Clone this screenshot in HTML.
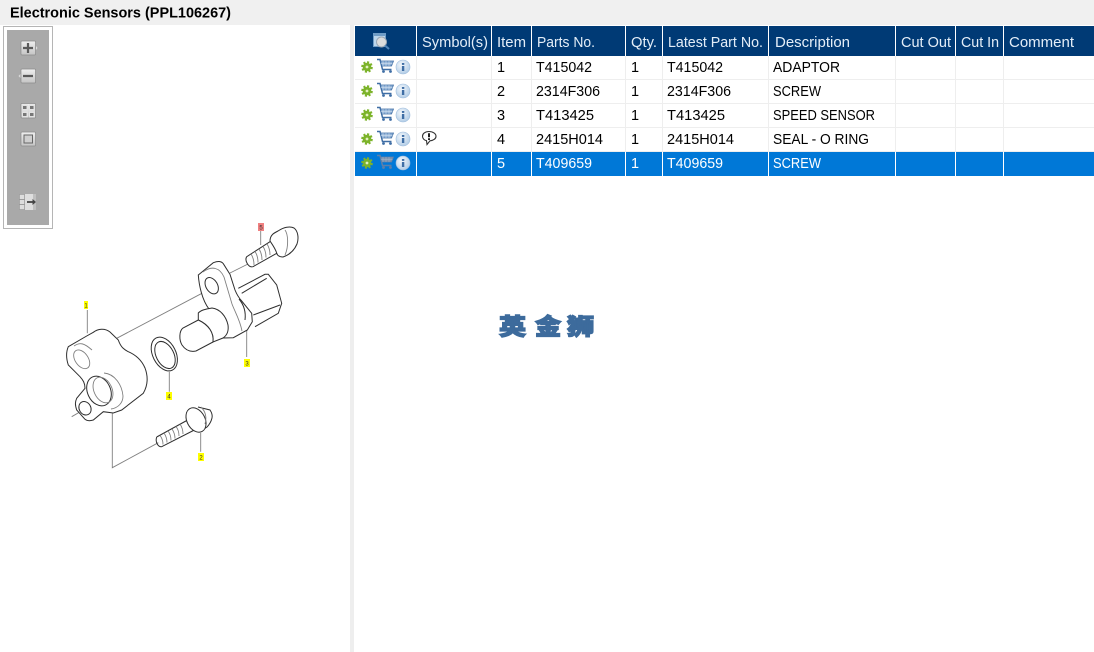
<!DOCTYPE html>
<html><head><meta charset="utf-8"><style>
html,body{margin:0;padding:0;width:1094px;height:652px;overflow:hidden;background:#fff}
svg{display:block;font-family:"Liberation Sans",sans-serif}
.h{fill:#e4eef8;font-size:14.5px}
.c{fill:#000;font-size:14.5px}
.w{fill:#fff;font-size:14.5px}
.d{fill:none;stroke:#2e2e2e;stroke-width:1}
.l{fill:none;stroke:#808080;stroke-width:.9}
.n{font-size:6px;fill:#333;text-anchor:middle}
</style></head><body>
<svg width="1094" height="652" viewBox="0 0 1094 652" xmlns="http://www.w3.org/2000/svg">
<defs>
<filter id="s" x="-5%" y="-5%" width="110%" height="110%"><feGaussianBlur stdDeviation=".3"/></filter>
<linearGradient id="b" x1="0" y1="0" x2="0" y2="1"><stop offset="0" stop-color="#efefef"/><stop offset="1" stop-color="#c4c4c4"/></linearGradient>
<radialGradient id="i" cx=".4" cy=".35" r=".8"><stop offset="0" stop-color="#f4f8fc"/><stop offset="1" stop-color="#a5c4e2"/></radialGradient>
<g id="gear"><circle r="4.300" fill="#7cb32a"/><circle r="4.800" fill="none" stroke="#7cb32a" stroke-width="2" stroke-dasharray="2.100 1.650"/><circle r="1.400" fill="#e3f0c0"/></g>
<g id="cart"><path d="M-8-6.500H-5L-2.500 3.500H6.500" fill="none" stroke="#3f6ea5" stroke-width="1.500"/><path d="M-4.700-5H8.500L6.500 0H-3.200Z" fill="#8fb0d6" stroke="#3f6ea5" stroke-width=".8"/><path d="M-2-5V0M1-5V0M4-5V0M-4-2.500H7.500" stroke="#dbe7f3" stroke-width=".5"/><circle cx="-1.500" cy="5.500" r="1.400" fill="#3f6ea5"/><circle cx="5.500" cy="5.500" r="1.400" fill="#3f6ea5"/></g>
<g id="cart2"><path d="M-8-6.500H-5L-2.500 3.500H6.500" fill="none" stroke="#5f7fa8" stroke-width="1.500"/><path d="M-4.700-5H8.500L6.500 0H-3.200Z" fill="#7c93b0" stroke="#5f7fa8" stroke-width=".8"/><path d="M-2-5V0M1-5V0M4-5V0M-4-2.500H7.500" stroke="#a9b8ca" stroke-width=".5"/><circle cx="-1.500" cy="5.500" r="1.400" fill="#5f7fa8"/><circle cx="5.500" cy="5.500" r="1.400" fill="#5f7fa8"/></g>
<g id="info"><circle r="7" fill="url(#i)" stroke="#9dbcdc" stroke-width=".6"/><rect x="-1.100" y="-1" width="2.400" height="5" fill="#3f6ea5"/><rect x="-1.100" y="-4" width="2.400" height="1.900" fill="#3f6ea5"/></g>
</defs>

<rect width="1094" height="25" fill="#f0f0f0"/>
<rect x="350" y="25" width="4" height="627" fill="#eeeeee"/>
<text x="10" y="17.500" font-size="14.500" font-weight="700" fill="#000" textLength="221" lengthAdjust="spacingAndGlyphs">Electronic Sensors (PPL106267)</text>

<rect x="3.500" y="26.500" width="49" height="202" fill="#fff" stroke="#b5b5b5"/>
<rect x="7" y="30" width="42" height="195" fill="#a9a9a9"/>
<g stroke="#8c8c8c" stroke-width=".7" fill="url(#b)">
<rect x="21" y="41" width="14.500" height="14" rx="1"/>
<rect x="21" y="69" width="14.500" height="14" rx="1"/>
<rect x="21" y="103.500" width="14.500" height="14.500" rx="1"/>
<rect x="21" y="132" width="14.500" height="14" rx="1"/>
</g>
<path d="M36 46l1.500 2-1.500 2ZM20.500 74l-2 2 2 2Z" fill="#ddd"/>
<path d="M28 43v10M23 48h10M23 76h10" stroke="#5a5a5a" stroke-width="2.200"/>
<path d="M22 104.500h6v6h-6ZM29 104.500h6v6h-6ZM22 111.500h6v6h-6ZM29 111.500h6v6h-6Z" fill="#e2e2e2"/>
<path d="M23 106h3.500v3H23ZM30 106h3.500v3H30ZM23 113h3.500v3H23ZM30 113h3.500v3H30Z" fill="#777"/>
<rect x="24" y="135" width="8.500" height="8" fill="#cfcfcf" stroke="#666" stroke-width="1"/>
<rect x="19.500" y="194.500" width="5" height="15" fill="#ddd" stroke="#999" stroke-width=".6"/>
<path d="M19.500 199.500h5M19.500 204.500h5" stroke="#888" stroke-width=".8"/>
<rect x="25" y="194" width="8" height="16" fill="#e8e8e8" opacity=".85"/>
<rect x="33" y="194" width="3" height="16" fill="#e8e8e8" opacity=".35"/>
<path d="M27 202h7" stroke="#444" stroke-width="1.800"/><path d="M32.500 199l3.500 3-3.500 3Z" fill="#444"/>

<g filter="url(#s)">
<path class="l" d="M116.700 338.300L205 291.700M230 273L250 263M260.700 231V245M246.700 330V357M87.300 310V333.300M71.700 416.700L86.700 408M112.300 413V467.700L158.300 442.700M169.300 371.700V391.700M200.700 433V451.700"/>
<path class="d" style="fill:#fff" d="M68.300 346.700L86.700 336 93.300 332.300C98 328.500 105 328 110 332L118.300 340C121 348 125 350 128.300 351.700C136 355 142 361 145 368C148 376 148 385 143.300 393.300L121.700 410 113.300 413 103.300 411.700 93.300 420C90 421 87 421 85 419.300L76.700 410C75 405 75 402 76.700 398.300L85 388.300C85 383 83 380 80 376.700L68.300 365C66 358 66 352 68.300 346.700Z"/>
<ellipse class="l" cx="81.700" cy="359.300" rx="6.500" ry="10.500" transform="rotate(-35 81.700 359.300)"/>
<ellipse class="d" cx="99" cy="391" rx="11.500" ry="15.500" transform="rotate(-25 99 391)" stroke-width="1.400"/>
<ellipse class="l" cx="103" cy="390" rx="9" ry="13.500" transform="rotate(-25 103 390)"/>
<path class="l" d="M104 373C115 374 122 385 123 396 123 403 118 408 111 409M74 346C80 342 84 343 92 350"/>
<ellipse class="d" cx="85" cy="408.300" rx="5.800" ry="7" transform="rotate(-30 85 408.300)"/>

<ellipse class="d" cx="164.300" cy="354" rx="11.500" ry="18" transform="rotate(-27 164.300 354)" stroke-width="1"/>
<ellipse class="d" cx="165" cy="355" rx="8.800" ry="14.500" transform="rotate(-27 165 355)" stroke-width="1.200"/>

<path class="d" d="M238.300 288.300L265 274.300H268.300L276.700 285 281.700 303.300 278.300 313.300 255 326.700M241.700 293.300L266.700 278.300M253.300 315L280 305"/>
<path class="d" style="fill:#fff" d="M198.300 275L213.300 262.700C218 261 221 261 223.300 263.700L230 274.300 235 290C237 295 239 298 241.700 301L251.700 313.300 252.300 321.700 247.300 330 233.300 337.700 223.300 338 209 309C202 300 199 285 198.300 275Z"/>
<ellipse class="d" cx="211.700" cy="285.700" rx="5.800" ry="8.800" transform="rotate(-30 211.700 285.700)" stroke-width="1"/>
<path class="l" d="M203 272C212 265 220 268 224 277L232 304C235 312 240 320 242 331"/>
<path class="d" style="fill:#fff" d="M198.300 320V313C201 310 206 309 212 308C220 309 226 316 228 325C229 332 226 336 223 338L213 342C214 333 209 325 198.300 320Z"/>
<path class="d" style="fill:#fff" d="M198.300 320L183 328C179 331 179 340 182 345C186 351 191 352 196 351L213 342C214 333 209 325 198.300 320Z"/>
<path class="d" d="M239 299C244 305 246 312 245 320"/>

<path class="d" style="fill:#fff" d="M270 241.700L246.700 256.700C244.500 260 248 268 253 266.700L276.700 253.300"/>
<path class="l" d="M251 254C253 257 254 261 254 265M255 251.500C257 254.500 258 258.500 258 262.500M259 249C261 252 262 256 262 260M263 246.500C265 249.500 266 253.500 266 257.500M267 244C269 247 270 251 270 255"/>
<path class="d" style="fill:#fff" d="M270 241C270 235 274 233 278 231C284 227 290 226 294 228C298 231 299 238 297 244C294 251 289 255 283 257C279 257 277 255 276.700 253C275 248 272 244 270 241Z"/>
<path class="l" d="M285 230C288 234 289 246 285 255"/>

<path class="d" d="M156.700 437L195 416M161.700 446.700L198.300 428M156.700 437C155 442 158 447 161.700 446.700"/>
<path class="l" d="M160 435.500C162 438 163 441 163 444.500M164 433C166 436 167 439 167 442.500M168 431C170 433.500 171 436.500 171 440.500M172 429C174 432 175 435 175 438.500M176 426.500C178 429 179 432 179 436M180 424C182 427 183 430 183 434"/>
<path class="d" d="M198 407L210 410C212 413 212.500 416 212 418C211 422 209 425 207 427L201 431"/>
<ellipse class="d" style="fill:#fff" cx="196" cy="420" rx="9" ry="13" transform="rotate(-28 196 420)"/>
<path class="l" d="M201 407C205 411 207 417 205 424"/>

<rect x="84" y="301" width="4" height="8" fill="#ffff00"/><text class="n" x="86" y="307.500">1</text>
<rect x="198" y="453" width="6" height="8" fill="#ffff00"/><text class="n" x="201" y="459.500">2</text>
<rect x="244" y="359" width="6" height="8" fill="#ffff00"/><text class="n" x="247" y="365.500">3</text>
<rect x="166" y="392" width="6" height="8" fill="#ffff00"/><text class="n" x="169" y="398.500">4</text>
<rect x="258" y="223" width="6" height="8" fill="#f08080"/><text class="n" x="261" y="229.500">5</text>
</g>

<rect x="355" y="26" width="739" height="30" fill="#003a75"/>
<rect x="355" y="152" width="739" height="24" fill="#0078d7"/>
<path d="M355 79.500H1094M355 103.500H1094M355 127.500H1094M355 151.500H1094" stroke="#eeeeee"/>
<path d="M416.500 56V152M491.500 56V152M531.500 56V152M625.500 56V152M662.500 56V152M768.500 56V152M895.500 56V152M955.500 56V152M1003.500 56V152" stroke="#eeeeee"/>
<path d="M416.500 26V56M491.500 26V56M531.500 26V56M625.500 26V56M662.500 26V56M768.500 26V56M895.500 26V56M955.500 26V56M1003.500 26V56M416.500 152V176M491.500 152V176M531.500 152V176M625.500 152V176M662.500 152V176M768.500 152V176M895.500 152V176M955.500 152V176M1003.500 152V176" stroke="#fff"/>

<rect x="373.500" y="33.500" width="12" height="13" fill="#bcd6ec" stroke="#6f9cc6"/>
<rect x="373.500" y="33.500" width="12" height="2.500" fill="#6f9cc6"/>
<circle cx="381.500" cy="42" r="5" fill="#dcdcdc" stroke="#9aa7b5"/>
<path d="M385 45.500l4 3.500" stroke="#4f83b8" stroke-width="2"/>

<g class="h">
<text x="422" y="47" textLength="66" lengthAdjust="spacingAndGlyphs">Symbol(s)</text>
<text x="497" y="47" textLength="29" lengthAdjust="spacingAndGlyphs">Item</text>
<text x="537" y="47" textLength="58" lengthAdjust="spacingAndGlyphs">Parts No.</text>
<text x="631" y="47" textLength="26" lengthAdjust="spacingAndGlyphs">Qty.</text>
<text x="668" y="47" textLength="95" lengthAdjust="spacingAndGlyphs">Latest Part No.</text>
<text x="775" y="47" textLength="75" lengthAdjust="spacingAndGlyphs">Description</text>
<text x="901" y="47" textLength="50" lengthAdjust="spacingAndGlyphs">Cut Out</text>
<text x="961" y="47" textLength="38" lengthAdjust="spacingAndGlyphs">Cut In</text>
<text x="1009" y="47" textLength="65" lengthAdjust="spacingAndGlyphs">Comment</text>
</g>

<g class="c">
<text x="497" y="72">1</text><text x="536" y="72" textLength="56" lengthAdjust="spacingAndGlyphs">T415042</text><text x="631" y="72">1</text><text x="667" y="72" textLength="56" lengthAdjust="spacingAndGlyphs">T415042</text><text x="773" y="72" textLength="67" lengthAdjust="spacingAndGlyphs">ADAPTOR</text>
<text x="497" y="96">2</text><text x="536" y="96" textLength="64" lengthAdjust="spacingAndGlyphs">2314F306</text><text x="631" y="96">1</text><text x="667" y="96" textLength="64" lengthAdjust="spacingAndGlyphs">2314F306</text><text x="773" y="96" textLength="48" lengthAdjust="spacingAndGlyphs">SCREW</text>
<text x="497" y="120">3</text><text x="536" y="120" textLength="58" lengthAdjust="spacingAndGlyphs">T413425</text><text x="631" y="120">1</text><text x="667" y="120" textLength="58" lengthAdjust="spacingAndGlyphs">T413425</text><text x="773" y="120" textLength="102" lengthAdjust="spacingAndGlyphs">SPEED SENSOR</text>
<text x="497" y="144">4</text><text x="536" y="144" textLength="67" lengthAdjust="spacingAndGlyphs">2415H014</text><text x="631" y="144">1</text><text x="667" y="144" textLength="67" lengthAdjust="spacingAndGlyphs">2415H014</text><text x="773" y="144" textLength="96" lengthAdjust="spacingAndGlyphs">SEAL - O RING</text>
</g>
<g class="w">
<text x="497" y="168">5</text><text x="536" y="168" textLength="56" lengthAdjust="spacingAndGlyphs">T409659</text><text x="631" y="168">1</text><text x="667" y="168" textLength="56" lengthAdjust="spacingAndGlyphs">T409659</text><text x="773" y="168" textLength="48" lengthAdjust="spacingAndGlyphs">SCREW</text>
</g>

<use href="#gear" x="367" y="67"/><use href="#cart" x="385" y="66"/><use href="#info" x="403" y="67"/>
<use href="#gear" x="367" y="91"/><use href="#cart" x="385" y="90"/><use href="#info" x="403" y="91"/>
<use href="#gear" x="367" y="115"/><use href="#cart" x="385" y="114"/><use href="#info" x="403" y="115"/>
<use href="#gear" x="367" y="139"/><use href="#cart" x="385" y="138"/><use href="#info" x="403" y="139"/>
<use href="#gear" x="367" y="163"/><use href="#cart2" x="385" y="162"/><use href="#info" x="403" y="163"/>

<path d="M429 131.500C425 131.500 422.500 133.700 422.500 136.200 422.500 138.700 424.500 140.300 426.500 140.700L427 144.500 430 140.800C433.500 140.600 436 138.700 436 136.200 436 133.700 433 131.500 429 131.500Z" fill="#fff" stroke="#333" stroke-width="1.100"/>
<path d="M429 133.200V137.300M429 138.300V140" stroke="#222" stroke-width="2"/>

<g font-size="23" font-weight="900" fill="#3d6b9c" stroke="#3d6b9c" stroke-width="1.200" style="font-family:'Noto Sans CJK SC',sans-serif">
<text transform="translate(499 334.500) scale(1.180 1)">英</text>
<text transform="translate(535 334.500) scale(1.140 1)">金</text>
<text transform="translate(567 334.500) scale(1.180 1)">狮</text>
</g>
</svg>
</body></html>
